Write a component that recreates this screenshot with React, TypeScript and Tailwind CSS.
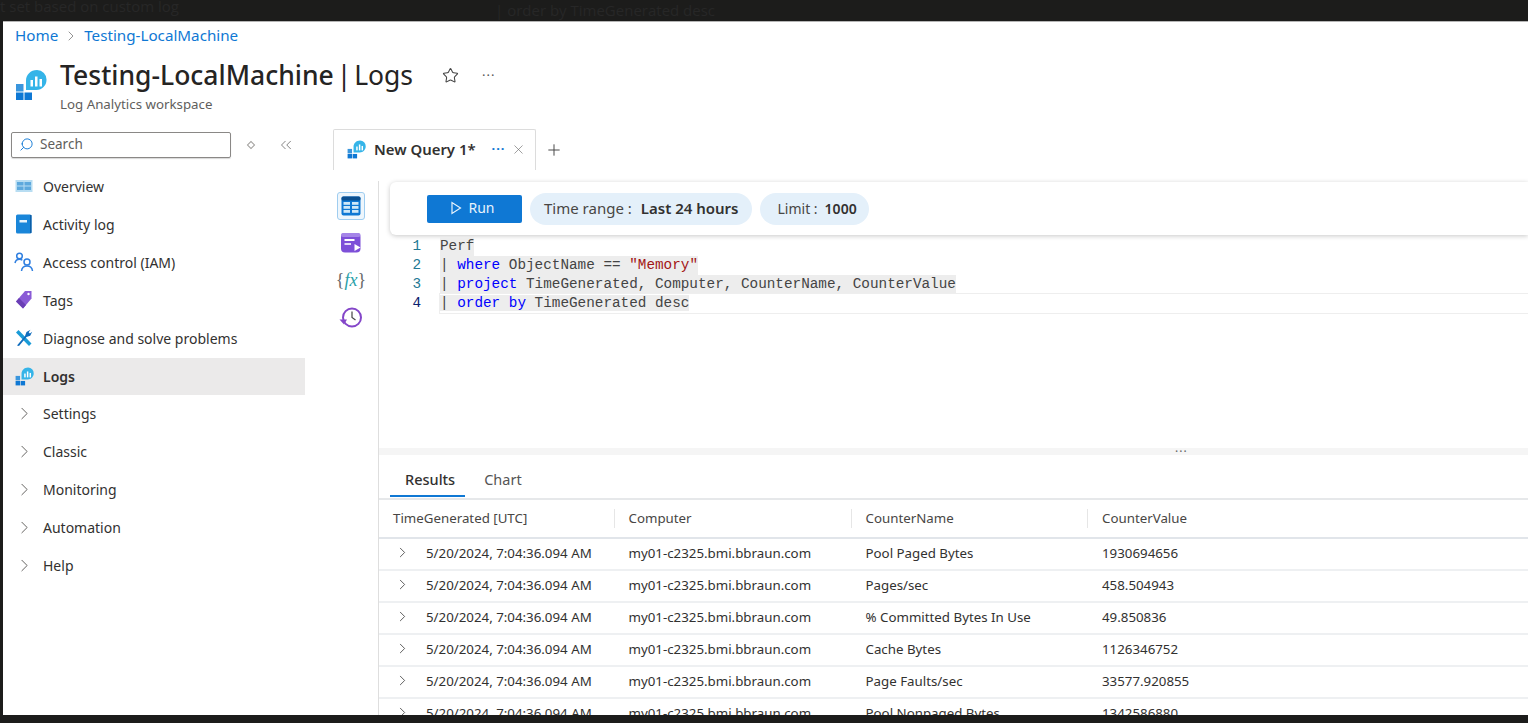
import React from 'react';
import { ChevronRight, ChevronsLeft, Plus, Search, Star, X } from 'lucide-react';

const LogIcon = ({ size = 32 }: { size?: number }) => (
  <svg width={size} height={size} viewBox="0 0 32 32">
    <path d="M22 1a9.5 9.5 0 0 1 9.5 10c0 5.500-4.500 10-10 10H11v-9.500C11 6 15.500 1 22 1z" fill="#35b4e8" />
    <rect x="15.5" y="11" width="2.5" height="6.500" fill="#fff" />
    <rect x="20" y="7.5" width="2.5" height="10" fill="#fff" />
    <rect x="24.500" y="10" width="2.5" height="7.500" fill="#fff" />
    <rect x="1" y="15" width="7.5" height="7.5" fill="#3a96dd" />
    <rect x="1" y="23.5" width="7.5" height="7.5" fill="#0f78d4" />
    <rect x="9.5" y="23.5" width="7.5" height="7.5" fill="#0f78d4" />
  </svg>
);

const OverviewIcon = () => (
  <svg width="18" height="18" viewBox="0 0 18 18">
    <rect x="0.5" y="3" width="17" height="12" fill="#b8ddf2" />
    <rect x="2" y="5" width="6.5" height="3.5" fill="#5ea9dd" />
    <rect x="9.5" y="5" width="6.5" height="3.5" fill="#5ea9dd" />
    <rect x="2" y="9.5" width="6.5" height="3.5" fill="#5ea9dd" />
    <rect x="9.5" y="9.5" width="6.5" height="3.5" fill="#5ea9dd" />
  </svg>
);

const ActivityIcon = () => (
  <svg width="18" height="20" viewBox="0 0 18 20">
    <rect x="1" y="0.5" width="15.5" height="19" rx="1.5" fill="#1a86d9" />
    <rect x="15" y="1" width="1.5" height="18" fill="#0d5ea6" />
    <rect x="4.5" y="6" width="7.5" height="2.5" fill="#e8f4fc" />
  </svg>
);

const AccessIcon = () => (
  <svg width="20" height="20" viewBox="0 0 20 20" fill="none" stroke="#2f7fe0" strokeWidth="1.5">
    <circle cx="5.5" cy="4" r="2.8" />
    <path d="M1 11c.5-2.500 2.500-3.800 4.500-3.800 1 0 2 .3 2.800 1" />
    <circle cx="13" cy="10" r="3" />
    <path d="M7.500 19c.3-3 2.600-5 5.500-5s5.200 2 5.500 5" />
  </svg>
);

const TagIcon = () => (
  <svg width="18" height="20" viewBox="0 0 18 20">
    <path d="M10 1h6.500v7.500L8 18.500 1 11.500z" fill="#8a5bd6" />
    <path d="M8 18.500 1 11.500l3-3.500 7 7z" fill="#6a3fb5" />
    <circle cx="13.5" cy="4" r="1.2" fill="#fff" />
  </svg>
);

const ToolsIcon = () => (
  <svg width="18" height="18" viewBox="0 0 18 18">
    <path d="M1 3.500 3.500 1l13 13.500-2.500 2.500z" fill="#1a9bd7" />
    <path d="M2 16.500 10 7l1.500-4L15.500 .8l-1.800 2.400 1.200 1.200 2.300-1.700-2 4L11.500 8 4 17z" fill="#0f6cbd" />
  </svg>
);

const GridIcon = () => (
  <svg width="20" height="20" viewBox="0 0 20 20">
    <rect x="0.5" y="0.5" width="19" height="19" rx="2" fill="#0f78d4" />
    <rect x="0.5" y="0.5" width="19" height="4" rx="1.5" fill="#0b4f8f" />
    <g fill="#cfe8f8">
      <rect x="2.5" y="6" width="6.5" height="2.8" />
      <rect x="11" y="6" width="6.5" height="2.8" />
      <rect x="2.5" y="10" width="6.5" height="2.8" />
      <rect x="11" y="10" width="6.5" height="2.8" />
      <rect x="2.5" y="14" width="6.5" height="2.8" />
      <rect x="11" y="14" width="6.5" height="2.8" />
    </g>
  </svg>
);

const QueryIcon = () => (
  <svg width="22" height="22" viewBox="0 0 22 22">
    <rect x="1" y="1" width="19.5" height="19.5" rx="4" fill="#7d4fd8" />
    <rect x="1" y="1" width="19.5" height="4" rx="2" fill="#a585e8" />
    <rect x="4.5" y="7" width="10" height="2" fill="#fff" />
    <rect x="4.5" y="11" width="6.5" height="2" fill="#e3d8f8" />
    <path d="M14.500 12v7l6-3.500z" fill="#fff" />
  </svg>
);

const HistoryIcon = () => (
  <svg width="24" height="24" viewBox="0 0 24 24" fill="none">
    <circle cx="13" cy="11.5" r="9" fill="#fff" stroke="#8446c9" strokeWidth="2" />
    <path d="M0.500 13.500h7.500L5 18.500z" fill="#8446c9" />
    <path d="M13 5.500v6l3.500 2.500" stroke="#444" strokeWidth="1.2" />
  </svg>
);

const navTop = [
  { label: 'Overview', icon: <OverviewIcon /> },
  { label: 'Activity log', icon: <ActivityIcon /> },
  { label: 'Access control (IAM)', icon: <AccessIcon /> },
  { label: 'Tags', icon: <TagIcon /> },
  { label: 'Diagnose and solve problems', icon: <ToolsIcon /> },
];

const navGroups = ['Settings', 'Classic', 'Monitoring', 'Automation', 'Help'];

const rows = [
  { name: 'Pool Paged Bytes', value: '1930694656' },
  { name: 'Pages/sec', value: '458.504943' },
  { name: '% Committed Bytes In Use', value: '49.850836' },
  { name: 'Cache Bytes', value: '1126346752' },
  { name: 'Page Faults/sec', value: '33577.920855' },
  { name: 'Pool Nonpaged Bytes', value: '1342586880' },
];

const Sidebar = () => (
  <aside className="w-[302px] shrink-0 pt-[3px]">
    <div className="flex items-center">
      <div className="ml-2 flex h-[26px] w-[220px] items-center gap-[6px] rounded-[2px] border border-[#8a8886] pb-[1px] pl-[7px] text-[13.5px] text-[#605e5c] shadow-[0_1px_1px_#d8d8d8]">
        <Search size={15} strokeWidth={1.5} className="-scale-x-100 text-[#0f78d4]" />
        Search
      </div>
      <span className="ml-[17px] h-[6px] w-[6px] rotate-45 border border-[#a19f9d]" />
      <ChevronsLeft size={18} strokeWidth={1.2} className="ml-[23px] text-[#777]" />
    </div>
    <nav className="mt-[10px] text-[14px] text-[#323130]">
      {navTop.map(item => (
        <div key={item.label} className="flex h-[38px] items-center pb-[2px]">
          <span className="flex w-[40px] justify-center pl-[2px]">{item.icon}</span>
          <span>{item.label}</span>
        </div>
      ))}
      <div className="flex h-[37px] items-center bg-[#ebeaea] font-semibold">
        <span className="flex w-[40px] justify-center pl-[2px]">
          <LogIcon size={19} />
        </span>
        Logs
      </div>
      {navGroups.map(group => (
        <div key={group} className="flex h-[38px] items-center pb-[2px]">
          <span className="flex w-[40px] justify-center pl-[2px]">
            <ChevronRight size={21} strokeWidth={1.1} className="text-[#605e5c]" />
          </span>
          {group}
        </div>
      ))}
    </nav>
  </aside>
);

const QueryEditor = () => (
  <div className="flex h-[213px] pt-[2px] font-['Liberation_Mono',monospace] text-[14.33px] leading-[19px] text-[#444]">
    <div className="w-[42px] text-right text-[#237893]">
      <div>1</div>
      <div>2</div>
      <div>3</div>
      <div className="text-[#0b216f]">4</div>
    </div>
    <div className="ml-[19px] flex-1">
      <div className="w-fit bg-[#ededed]">Perf</div>
      <div className="w-fit bg-[#ededed]">
        | <span className="text-[#0000ff]">where</span> ObjectName == <span className="text-[#a31515]">"Memory"</span>
      </div>
      <div className="w-fit bg-[#ededed]">
        | <span className="text-[#0000ff]">project</span> TimeGenerated, Computer, CounterName, CounterValue
      </div>
      <div className="h-[19px] shadow-[0_0_0_1px_#eeeeee]">
        <span className="bg-[#ededed]">
          | <span className="text-[#0000ff]">order by</span> TimeGenerated desc
        </span>
      </div>
    </div>
  </div>
);

const Results = () => (
  <section className="text-[13.3px] text-[#323130]">
    <div className="relative h-[7px] bg-[#f5f5f5]">
      <span className="absolute top-[-5px] left-[796px] text-[12px] tracking-[1px] text-[#666]">···</span>
    </div>
    <div className="flex h-[45px] items-end gap-[19px] border-b-2 border-[#e6e8ea] pl-[11px] text-[14.5px]">
      <span className="mb-[1px] border-b-[2.5px] border-[#0f78d4] pr-[10px] pb-[4px] pl-[15px] font-medium text-[#323130]">Results</span>
      <span className="pb-[7px] text-[#555]">Chart</span>
    </div>
    <div className="grid h-[39px] grid-cols-[234.5px_237px_236.5px_1fr] items-center border-b-2 border-[#e1e5ea] text-[#484644]">
      <span className="pl-[14px]">TimeGenerated [UTC]</span>
      <span className="border-l border-[#e6e6e6] pl-[14px]">Computer</span>
      <span className="border-l border-[#e6e6e6] pl-[14px]">CounterName</span>
      <span className="border-l border-[#e6e6e6] pl-[14px]">CounterValue</span>
    </div>
    {rows.map(row => (
      <div key={row.name} className="grid h-[32px] grid-cols-[234.5px_237px_236.5px_1fr] items-center border-b-2 border-[#eef0f2]">
        <span className="flex items-center whitespace-nowrap">
          <ChevronRight size={17} strokeWidth={1.2} className="ml-[15px] mr-[15px] -mt-[3px] text-[#444]" />
          5/20/2024, 7:04:36.094 AM
        </span>
        <span className="pl-[15px]">my01-c2325.bmi.bbraun.com</span>
        <span className="pl-[15px]">{row.name}</span>
        <span className="pl-[15px]">{row.value}</span>
      </div>
    ))}
  </section>
);

export default function App() {
  return (
    <div className="flex h-[723px] w-[1528px] flex-col overflow-hidden bg-[#1c1c1b] font-['Noto_Sans',sans-serif]">
      <div className="flex h-[21px] shrink-0 items-center overflow-hidden font-['Open_Sans',sans-serif] text-[15px] whitespace-nowrap text-[#272727]">
        <span className="-mt-[8px] w-[495px]">t set based on custom log</span>
        <span>| order by TimeGenerated desc</span>
      </div>
      <main className="mb-[8px] ml-[3px] flex min-h-0 flex-1 flex-col overflow-hidden border-t border-[#b5b5b5] bg-white">
        <div className="flex h-[27px] shrink-0 items-center gap-[5px] pl-[12px] text-[15.2px] text-[#0f78d4]">
          <span>Home</span>
          <ChevronRight size={16} strokeWidth={1.2} className="text-[#777]" />
          <span>Testing-LocalMachine</span>
        </div>
        <header className="flex h-[80px] shrink-0 pt-[9px] pl-[12px]">
          <div className="pt-[11px]">
            <LogIcon />
          </div>
          <div className="ml-[13px]">
            <h1 className="text-[26.5px] leading-[34px] text-[#252423] [word-spacing:-4px]">
              <span className="font-medium">Testing-LocalMachine</span> | Logs
            </h1>
            <p className="text-[13.3px] leading-[24px] text-[#605e5c]">Log Analytics workspace</p>
          </div>
          <Star size={17} strokeWidth={1.5} className="mt-[9px] ml-[29px] text-[#444]" />
          <span className="mt-[8px] ml-[23px] text-[13px] tracking-[1px] text-[#555]">···</span>
        </header>
        <div className="flex min-h-0 flex-1">
          <Sidebar />
          <div className="flex min-w-0 flex-1 flex-col pl-[28px]">
            <div className="flex h-[41px] shrink-0 items-center">
              <div className="flex h-[41px] w-[203px] items-center rounded-t-[2px] border-x border-t border-[#dcdcdc] pb-[2px] pl-[13px] text-[14.9px] font-semibold text-[#323130]">
                <LogIcon size={19} />
                <span className="ml-[8px]">New Query 1*</span>
                <span className="ml-[16px] text-[13px] font-bold tracking-[1px] text-[#0f78d4]">···</span>
                <X size={15} strokeWidth={1} className="ml-[5px] text-[#666]" />
              </div>
              <Plus size={18} strokeWidth={1.3} className="ml-[9px] text-[#444]" />
            </div>
            <div className="mt-[11px] flex min-h-0 flex-1">
              <div className="flex w-[46px] shrink-0 flex-col items-center gap-[13px] border-r border-[#dedede] pt-[11px] pr-[9px]">
                <span className="flex h-[28px] w-[28px] shrink-0 items-center justify-center rounded-[3px] border border-[#9fcdf0] bg-[#eef6fc]">
                  <GridIcon />
                </span>
                <span className="-mt-[1px] flex">
                  <QueryIcon />
                </span>
                <span className="font-['Liberation_Serif',serif] text-[18px] leading-[26px] text-[#666]">
                  {'{'}<span className="text-[#2aa0a8] italic">fx</span>{'}'}
                </span>
                <HistoryIcon />
              </div>
              <div className="min-w-0 flex-1">
                <div className="mt-[1px] ml-[11px] flex h-[53px] items-center gap-[8px] rounded-l-[6px] bg-white pl-[37px] shadow-[0_1px_5px_rgba(0,0,0,0.22)]">
                  <button className="flex h-[28px] w-[95px] items-center justify-center gap-[6px] rounded-[2px] bg-[#0f78d4] pr-[4px] pb-[2px] text-[14px] text-[#e8f3fc]">
                    <svg width="12" height="14" viewBox="0 0 12 14" fill="none" stroke="#e8f3fc" strokeWidth="1.2">
                      <path d="M2 1.500v11l8.500-5.500z" />
                    </svg>
                    Run
                  </button>
                  <span className="flex h-[32px] items-center rounded-full bg-[#e4f0fa] pr-[13px] pl-[14px] text-[15px] text-[#484644]">
                    Time range :<span className="ml-[9px] font-semibold text-[#323130]">Last 24 hours</span>
                  </span>
                  <span className="flex h-[32px] items-center rounded-full bg-[#e4f0fa] pr-[12px] pl-[18px] text-[14px] text-[#484644]">
                    Limit :<span className="ml-[7px] font-semibold text-[#323130]">1000</span>
                  </span>
                </div>
                <QueryEditor />
                <Results />
              </div>
            </div>
          </div>
        </div>
      </main>
    </div>
  );
}
